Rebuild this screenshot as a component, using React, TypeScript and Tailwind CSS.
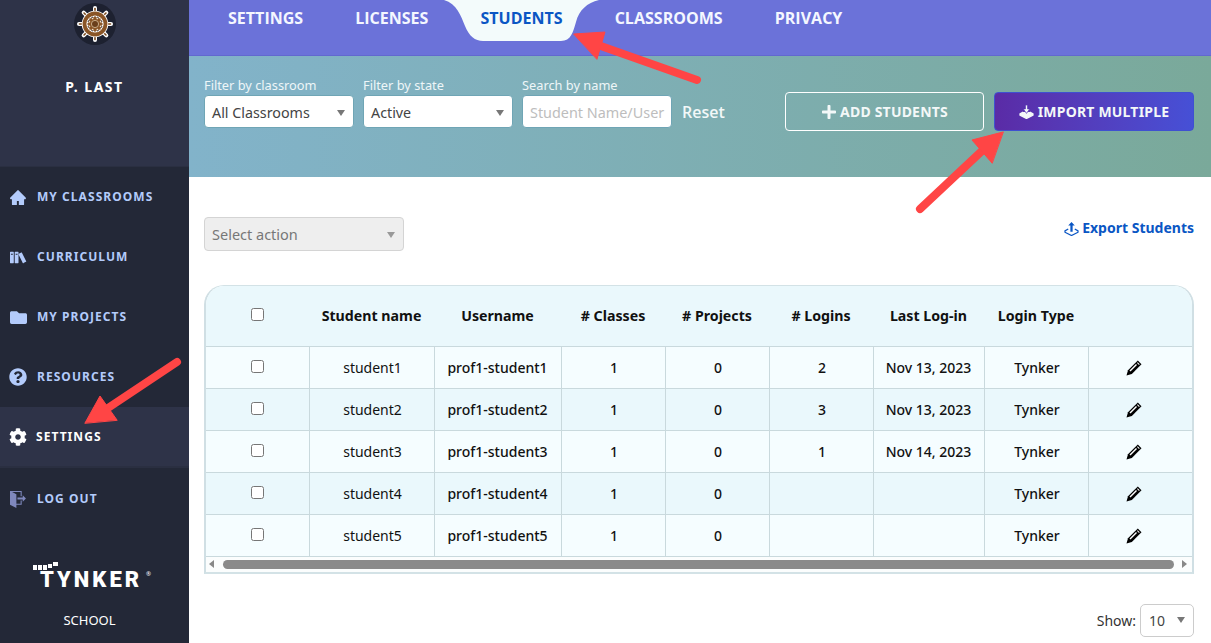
import { FaFolder, FaQuestionCircle, FaCog, FaPlus } from 'react-icons/fa';
import { AiFillHome } from 'react-icons/ai';
import { ImBooks, ImExit } from 'react-icons/im';
import type { ReactNode } from 'react';

const navItems: { label: string; icon: ReactNode; active?: boolean }[] = [
  { label: 'MY CLASSROOMS', icon: <AiFillHome className="text-[19px]" /> },
  { label: 'CURRICULUM', icon: <ImBooks className="text-[17px]" /> },
  { label: 'MY PROJECTS', icon: <FaFolder className="text-[17px]" /> },
  { label: 'RESOURCES', icon: <FaQuestionCircle className="text-[18px]" /> },
  { label: 'SETTINGS', icon: <FaCog className="text-[18px]" />, active: true },
];

const tabs = ['SETTINGS', 'LICENSES', 'STUDENTS', 'CLASSROOMS', 'PRIVACY'];

const columns = ['', 'Student name', 'Username', '# Classes', '# Projects', '# Logins', 'Last Log-in', 'Login Type', ''];

const students = [
  { name: 'student1', user: 'prof1-student1', logins: '2', last: 'Nov 13, 2023' },
  { name: 'student2', user: 'prof1-student2', logins: '3', last: 'Nov 13, 2023' },
  { name: 'student3', user: 'prof1-student3', logins: '1', last: 'Nov 14, 2023' },
  { name: 'student4', user: 'prof1-student4', logins: '', last: '' },
  { name: 'student5', user: 'prof1-student5', logins: '', last: '' },
];

const ShipWheel = () => (
  <svg width="42" height="42" viewBox="0 0 42 42">
    <circle cx="21" cy="21" r="21" fill="#1d2130" />
    <g strokeLinecap="round">
      {[0, 45, 90, 135, 180, 225, 270, 315].map((a) => (
        <g key={a} transform={`rotate(${a} 21 21)`}>
          <line x1="21" y1="21" x2="21" y2="5" stroke="#fff" strokeWidth="4" />
          <line x1="21" y1="21" x2="21" y2="5.500" stroke="#7a4a1e" strokeWidth="1.600" />
        </g>
      ))}
    </g>
    <circle cx="21" cy="21" r="10.500" fill="none" stroke="#fff" strokeWidth="5.500" />
    <circle cx="21" cy="21" r="10.500" fill="none" stroke="#8a5526" strokeWidth="3.800" />
    <circle cx="21" cy="21" r="7" fill="#8a5526" />
    <circle cx="21" cy="21" r="3.600" fill="#6a3f1b" stroke="#d9c2a0" strokeWidth="0.800" />
    {[0, 45, 90, 135, 180, 225, 270, 315].map((a) => (
      <circle key={a} cx="21" cy="15" r="0.800" fill="#f2e6d2" transform={`rotate(${a + 22} 21 21)`} />
    ))}
  </svg>
);

// tray with an arrow: outlined and pointing up for export, filled and pointing down for import
const TrayIcon = ({ up, className }: { up?: boolean; className: string }) => (
  <svg viewBox="0 0 16 15" className={className}>
    <path
      d="M4.500 7.500 1 9.500V11L8 14.500 15 11V9.500L11.500 7.500"
      stroke="currentColor"
      strokeWidth="1.300"
      strokeLinejoin="round"
      fill={up ? 'none' : 'currentColor'}
    />
    {up ? (
      <path d="M8 0 11.500 3.800H9.200V10.500H6.800V3.800H4.500z" fill="currentColor" />
    ) : (
      <path d="M6.800 0H9.200V4.200H11.500L8 9 4.500 4.200H6.800z" fill="currentColor" stroke="#5233b2" strokeWidth="0.800" />
    )}
  </svg>
);

const Pencil = () => (
  <svg viewBox="0 0 16 16" className="ml-[37px] mt-[1px] h-[16px] w-[16px]">
    <path d="M11.800 0.500 15.500 4.200 5.800 14 0.500 15.500 2 10.200z" fill="#000" />
    <path d="M11.700 2.300 13.700 4.300 13 5 11 3z" fill="#fff" />
    <path d="M10 4 11 5 4.500 11.500 3.500 10.500z" fill="#fff" />
  </svg>
);

const Caret = ({ color = 'border-t-[#777]' }: { color?: string }) => (
  <span className={`h-0 w-0 border-x-[4px] border-t-[6px] border-x-transparent ${color}`} />
);

const FakeSelect = ({ value }: { value: string }) => (
  <div className="flex h-[33px] w-[150px] items-center justify-between rounded-[4px] border border-[#6fa5b5] bg-white pl-[7px] pr-[8px] pt-[2px] text-[14.300px] text-[#444]">
    <span>{value}</span>
    <Caret />
  </div>
);

const Filter = ({ label, children }: { label: string; children: ReactNode }) => (
  <div className="flex w-[150px] flex-col">
    <label className="text-[12.800px] leading-[19px] text-[#eef6f8]">{label}</label>
    {children}
  </div>
);

const TynkerLogo = () => (
  <div className="relative flex h-[26px] w-[113px] items-end pl-[7px]">
    <svg width="25" height="8" viewBox="0 0 25 8" className="absolute left-0 top-0" fill="#fff">
      <rect x="0" y="3" width="4" height="5" />
      <rect x="5" y="3" width="4" height="5" />
      <rect x="10" y="3" width="4" height="5" />
      <rect x="15" y="2" width="4" height="4" />
      <rect x="20" y="0" width="5" height="4" />
    </svg>
    <span className="relative top-[2px] text-[22px] font-black leading-[20px] tracking-[3px] text-white font-['Roboto',sans-serif]">TYNKER</span>
    <span className="absolute right-[-5px] top-[9px] text-[6px] leading-none text-white">®</span>
  </div>
);

const Sidebar = () => (
  <aside className="flex h-full w-[189px] shrink-0 flex-col bg-[#232837]">
    <div className="flex h-[167px] flex-col items-center border-b border-[#2a2f41] bg-[#2e3348] pt-[3px]">
      <ShipWheel />
      <div className="mt-[32px] text-[14px] font-bold leading-[20px] tracking-[1.500px] text-white">P. LAST</div>
    </div>
    {navItems.map((item) => (
      <div
        key={item.label}
        className={
          item.active
            ? 'flex h-[61px] items-center gap-[9px] bg-[#2e3348] pb-[2px] pl-[9px] text-white shadow-[inset_0_-2px_0_#2a2f41]'
            : 'flex h-[60px] items-center gap-[10px] pl-[9px] text-[#b3cbfb]'
        }
      >
        <span className="flex w-[18px] justify-center">{item.icon}</span>
        <span className="text-[12px] font-bold tracking-[1.050px]">{item.label}</span>
      </div>
    ))}
    <div className="flex h-[62px] items-center gap-[10px] pl-[10px] text-[#b3cbfb]">
      <ImExit className="text-[17px] text-[#7f88bd]" />
      <span className="text-[12px] font-bold tracking-[1.050px]">LOG OUT</span>
    </div>
    <div className="mt-[32px] flex justify-center pr-[10px]">
      <TynkerLogo />
    </div>
    <div className="mt-[23px] pr-[10px] text-center text-[13px] leading-[18px] text-white">SCHOOL</div>
  </aside>
);

const TabBar = () => (
  <div className="flex h-[56px] items-start border-b border-[#6268cf] bg-[#6b72d9] pl-[13px] font-['Open_Sans',sans-serif] tracking-[0.020px]">
    {tabs.map((tab) =>
      tab === 'STUDENTS' ? (
        <div key={tab} className="relative px-[26px] pt-[6px] text-[16px] font-bold leading-[24px] text-[#0a56c4]">
          <svg width="156" height="41" viewBox="0 0 156 41" className="absolute left-[-10px] top-0">
            <path
              d="M0 0C13 4 17 16 21 26 25 36 31 41 39 41H117C127 41 129 32 132 22 135 10 143 3 155 0Z"
              fill="#f3fbfb"
            />
          </svg>
          <span className="relative">{tab}</span>
        </div>
      ) : (
        <div key={tab} className="px-[26px] pt-[6px] text-[16px] font-bold leading-[24px] text-[#f4f7ff]">
          {tab}
        </div>
      ),
    )}
  </div>
);

const FilterBar = () => (
  <div className="flex h-[121px] bg-linear-to-r from-[#82b3ca] to-[#7aa99a] pl-[15px] pr-[17px] pt-[20px]">
    <div className="flex gap-[9px]">
      <Filter label="Filter by classroom">
        <FakeSelect value="All Classrooms" />
      </Filter>
      <Filter label="Filter by state">
        <FakeSelect value="Active" />
      </Filter>
      <Filter label="Search by name">
        <div className="flex h-[33px] items-center overflow-hidden whitespace-nowrap rounded-[4px] border border-[#6fa5b5] bg-white px-[7px] pt-[2px] text-[14.400px] text-[#bdbdbd]">
          Student Name/User
        </div>
      </Filter>
    </div>
    <div className="ml-[10px] mt-[20px] h-[33px] font-['Open_Sans',sans-serif] text-[16px] font-semibold leading-[33px] text-[#f2f8f8]">Reset</div>
    <div className="ml-auto mt-[16px] flex gap-[10px] text-[14px] font-bold tracking-[0.200px] text-[#f3f8f8]">
      <button className="flex h-[39px] w-[199px] items-center justify-center gap-[3px] rounded-[4px] border border-white">
        <FaPlus className="text-[16px]" />
        ADD STUDENTS
      </button>
      <button className="flex h-[39px] w-[200px] items-center justify-center gap-[4px] rounded-[4px] border border-[#3f50d0] bg-linear-to-r from-[#5a2ba6] to-[#4650d6]">
        <TrayIcon className="h-[14px] w-[15px]" />
        IMPORT MULTIPLE
      </button>
    </div>
  </div>
);

const StudentsTable = () => (
  <div className="overflow-hidden rounded-t-[20px] border-x-2 border-t border-b-2 border-x-[#d0dfe4] border-y-[#d3e2e6] bg-white">
    <table className="w-[986px] table-fixed border-collapse text-center text-[14px] text-[#111]">
      <colgroup>
        <col className="w-[103px]" />
        <col className="w-[125px]" />
        <col className="w-[127px]" />
        <col className="w-[104px]" />
        <col className="w-[104px]" />
        <col className="w-[104px]" />
        <col className="w-[111px]" />
        <col className="w-[104px]" />
        <col className="w-[104px]" />
      </colgroup>
      <thead>
        <tr className="h-[60px] bg-[#eaf8fc]">
          {columns.map((c, i) => (
            <th key={i} className="text-[14.200px] font-bold">
              {i === 0 ? <input type="checkbox" className="relative top-[-3px] align-middle" /> : c}
            </th>
          ))}
        </tr>
      </thead>
      <tbody>
        {students.map((s, i) => (
          <tr key={s.name} className={i % 2 === 0 ? 'h-[42px] bg-[#f5fdff]' : 'h-[42px] bg-[#eaf8fc]'}>
            <td className="border border-l-0 border-[#c9d9dd]">
              <input type="checkbox" className="relative top-[-2px] align-middle" />
            </td>
            <td className="border border-[#c9d9dd] pl-[2px]">{s.name}</td>
            <td className="border border-[#c9d9dd] font-medium">{s.user}</td>
            <td className="border border-[#c9d9dd] pl-[2px] font-medium">1</td>
            <td className="border border-[#c9d9dd] pl-[2px] font-medium">0</td>
            <td className="border border-[#c9d9dd] pl-[2px] font-medium">{s.logins}</td>
            <td className="border border-[#c9d9dd] font-medium">{s.last}</td>
            <td className="border border-[#c9d9dd] pl-[2px] font-medium">Tynker</td>
            <td className="border border-r-0 border-[#c9d9dd]">
              <Pencil />
            </td>
          </tr>
        ))}
      </tbody>
    </table>
    <div className="flex h-[15px] items-center bg-[#fbfdfd] pl-[3px] pr-[5px]">
      <span className="h-0 w-0 border-y-[4px] border-r-[5px] border-y-transparent border-r-[#888]" />
      <div className="ml-[9px] mr-[8px] h-[9px] flex-1 rounded-full bg-[#8a8a8a]" />
      <span className="h-0 w-0 border-y-[4px] border-l-[5px] border-y-transparent border-l-[#888]" />
    </div>
  </div>
);

const Arrows = () => (
  <svg width="1211" height="643" viewBox="0 0 1211 643" className="pointer-events-none absolute left-0 top-0">
    <g fill="#ff4545" stroke="#ff4545" strokeLinecap="round" strokeLinejoin="round">
      <line x1="697" y1="80" x2="598" y2="45" strokeWidth="8" />
      <polygon points="574,34 605,32 597,59" strokeWidth="1" />
      <line x1="920" y1="209" x2="984" y2="149" strokeWidth="8" />
      <polygon points="1003,132 972,140 992,163" strokeWidth="1" />
      <line x1="177" y1="362" x2="108" y2="408" strokeWidth="8" />
      <polygon points="85,423 100,396 117,420" strokeWidth="1" />
    </g>
  </svg>
);

export default function App() {
  return (
    <div className="relative flex h-[643px] w-[1211px] overflow-hidden bg-white font-['Noto_Sans',sans-serif]">
      <Sidebar />
      <main className="flex min-w-0 flex-1 flex-col">
        <TabBar />
        <FilterBar />
        <div className="flex flex-1 flex-col pl-[15px] pr-[17px] pt-[40px]">
          <div className="flex h-[34px] items-start justify-between">
            <div className="flex h-[34px] w-[200px] items-center justify-between rounded-[4px] border border-[#d4d4d4] bg-[#eeeeee] pl-[7px] pr-[8px] pt-[2px] text-[14.500px] text-[#777]">
              <span>Select action</span>
              <Caret color="border-t-[#999]" />
            </div>
            <div className="mt-[1px] flex items-center gap-[3px] text-[14px] font-bold leading-[20px] text-[#0a56c4]">
              <TrayIcon up className="mt-[2px] h-[14px] w-[15px]" />
              Export Students
            </div>
          </div>
          <div className="mt-[34px]">
            <StudentsTable />
          </div>
          <div className="mt-[30px] flex items-center justify-end gap-[4px] text-[14px] text-[#333]">
            <span>Show:</span>
            <div className="flex h-[33px] w-[54px] items-center justify-between rounded-[5px] border border-[#ccc] pl-[8px] pr-[8px] text-[#444]">
              <span>10</span>
              <Caret />
            </div>
          </div>
        </div>
      </main>
      <Arrows />
    </div>
  );
}
